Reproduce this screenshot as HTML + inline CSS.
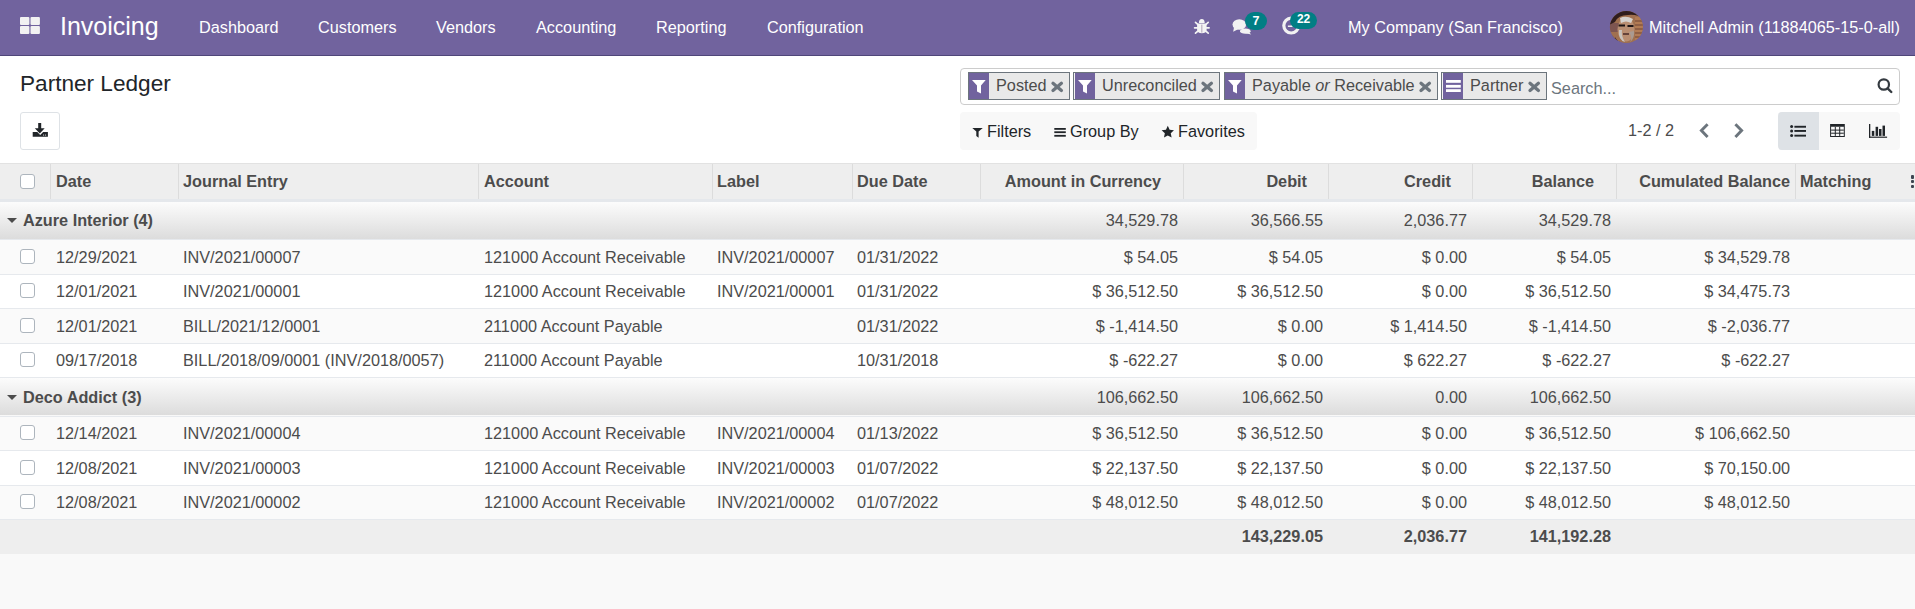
<!DOCTYPE html>
<html><head><meta charset="utf-8">
<style>
*{box-sizing:border-box;margin:0;padding:0}
html,body{width:1915px;height:609px;overflow:hidden;background:#f9f9f9;font-family:"Liberation Sans",sans-serif;color:#4c4c4c;font-size:16.25px}
.abs{position:absolute;white-space:nowrap}
.nav{position:absolute;left:0;top:0;width:1915px;height:56px;background:#71639e;border-bottom:1px solid #4f4679;color:#fff}
.nav .t{position:absolute;white-space:nowrap;font-size:16.25px;top:17.6px;line-height:18px}
.badge{position:absolute;height:18.4px;border-radius:9.2px;background:#017e84;color:#fff;font-size:12.5px;font-weight:bold;text-align:center;line-height:18px}
.cp{position:absolute;left:0;top:56px;width:1915px;height:107px;background:#fff}
.facet{position:absolute;top:72px;height:28px;border:1px solid #6c757d;background:#e9e9e9;white-space:nowrap}
.facet .ic{position:absolute;left:0;top:0;width:20px;height:26px;background:#71639e}
.facet .lb{position:absolute;left:27px;top:3.2px;font-size:16.25px;line-height:18px;color:#4c4c4c}
.facet .x{position:absolute;top:9px;width:11px;height:10px}
.facet.s{background:#e9e9e9}.facet.s .ic{left:1px}.facet.s .lb{left:28px}.facet.s:before{content:"";position:absolute;left:0;top:0;width:1px;height:26px;background:#f4f4f4}
.fb{position:absolute;top:112px;height:38px;font-size:16.25px;line-height:18px;color:#212529}
.thead{position:absolute;left:0;width:1915px;background:#eeeeee;border-top:1px solid #e2e2e2;border-bottom:3px solid #e5e8ec}
.sep{position:absolute;top:0;bottom:0;width:1px;background:#dcdcdc}
.th{position:absolute;top:8px;font-weight:bold;line-height:18px;white-space:nowrap;color:#4c4c4c}
.r{text-align:right}
.cb{position:absolute;left:20px;width:15px;height:15px;border:1px solid #adb5bd;border-radius:3px;background:#fff}
.grp{position:absolute;left:0;width:1915px;background:linear-gradient(#fcfcfc,#dcdcdc);border-bottom:1px solid #e6e9ed}
.grp .gl{position:absolute;left:23px;top:10px;font-weight:bold;line-height:18px;color:#4c4c4c}
.caret{position:absolute;left:7px;top:17px;width:0;height:0;border-left:5px solid transparent;border-right:5px solid transparent;border-top:5px solid #4c4c4c}
.row{position:absolute;left:0;width:1915px;background:#fff;border-bottom:1px solid #e6e9ed}
.row.odd{background:#fafafa}
.td{position:absolute;top:8px;line-height:18px;white-space:nowrap;color:#4c4c4c}
.grp .td{top:10px}
.foot{position:absolute;left:0;width:1915px;background:#eeeeee}
.b{font-weight:bold}
.opt{position:absolute;left:1910.5px;top:11.2px;width:4px}
.opt i{display:block;width:3.5px;height:3.5px;border-radius:1px;background:#3d4550;margin-bottom:1.3px}
</style></head><body>
<div class="nav">
  <svg class="abs" style="left:19px;top:16px" width="22" height="19" viewBox="0 0 22 19"><g fill="#f2f2f2"><rect x="1" y="1" width="9.4" height="8" rx="1"/><rect x="11.5" y="1" width="9.4" height="8" rx="1"/><rect x="1" y="10" width="9.4" height="8" rx="1"/><rect x="11.5" y="10" width="9.4" height="8" rx="1"/></g></svg>
  <div class="t" style="left:60px;top:12.3px;font-size:25px;line-height:28px">Invoicing</div>
  <div class="t" style="left:199px">Dashboard</div>
  <div class="t" style="left:318px">Customers</div>
  <div class="t" style="left:436px">Vendors</div>
  <div class="t" style="left:536px">Accounting</div>
  <div class="t" style="left:656px">Reporting</div>
  <div class="t" style="left:767px">Configuration</div>
  <!-- bug -->
  <svg class="abs" style="left:1190px;top:14px" width="24" height="24" viewBox="1190 14 24 24"><g fill="#f4f4f4"><path d="M1198.9 22.9A2.9 3.8 0 0 1 1204.7 22.9Z"/><path d="M1197.1 23.6H1206.6V29.5Q1206.6 33.2 1201.85 33.2Q1197.1 33.2 1197.1 29.5Z"/></g><g stroke="#f4f4f4" stroke-width="1.7" stroke-linecap="round"><path d="M1195.5 22.4L1198 24.6M1194.6 27.8H1197.6M1195.5 33.1L1198 31M1208.2 22.4L1205.7 24.6M1209.1 27.8H1206.1M1208.2 33.1L1205.7 31"/></g><rect x="1201.4" y="24.6" width="0.9" height="8" fill="#a898b0"/></svg>
  <!-- comments -->
  <svg class="abs" style="left:1225px;top:8px" width="30" height="32" viewBox="1225 8 30 32"><g fill="#f2f2f2"><ellipse cx="1239.3" cy="24.5" rx="6.8" ry="5.3"/><path d="M1234 27.5L1233.2 31.8L1238 29.2Z"/><ellipse cx="1245.3" cy="31.2" rx="5.3" ry="2.6"/><path d="M1248 31L1251.2 34.6L1245.5 33.2Z"/></g></svg>
  <div class="badge" style="left:1245px;top:11.7px;width:22px;height:18.2px;line-height:18px">7</div>
  <!-- clock -->
  <svg class="abs" style="left:1278px;top:10px" width="30" height="30" viewBox="1278 10 30 30"><circle cx="1291.2" cy="25.6" r="7.4" fill="none" stroke="#f2f2f2" stroke-width="3.2"/><path d="M1287.9 26.3H1292.5V21" fill="none" stroke="#f2f2f2" stroke-width="1.6"/></svg>
  <div class="badge" style="left:1290.2px;top:12.1px;width:26.8px;height:16.7px;line-height:14.5px;font-size:12px">22</div>
  <div class="t" style="left:1348px">My Company (San Francisco)</div>
  <svg class="abs" style="left:1609px;top:10px" width="35" height="34" viewBox="0 0 35 34"><defs><clipPath id="av"><ellipse cx="17.4" cy="17" rx="16.5" ry="16"/></clipPath></defs><g clip-path="url(#av)"><rect width="35" height="34" fill="#a0704f"/><rect x="0" y="13" width="10" height="9" fill="#7d5550"/><path d="M0 0H35V10Q30 4 19 5Q9 5 6 12L0 15Z" fill="#2f1d1d"/><path d="M0 22Q5 29 14 34H0Z" fill="#2a1b1b"/><ellipse cx="17" cy="19.5" rx="8.5" ry="12" fill="#b98e72"/><path d="M11 8Q17 5 24 9L22 13Q17 10 12 13Z" fill="#d6d2ce"/><path d="M10 20Q9 30 16 32Q12 26 13 20Z" fill="#c9c3bd"/><path d="M20 22Q24 28 21 32Q26 28 25 21Z" fill="#aa9a90"/><path d="M9.5 15.5h6.5M18.5 16h6" stroke="#1e1414" stroke-width="2.2"/><path d="M14 24h6" stroke="#4a2a2a" stroke-width="1.6"/><rect x="26" y="7" width="9" height="24" fill="#b57d55" opacity="0.85"/><path d="M26 11h9M26 15h9M26 19h9M26 23h9M26 27h9" stroke="#6e4434" stroke-width="1"/><path d="M6 27Q9 33 13 34L7 34Z" fill="#3a2525"/></g></svg>
  <div class="t" style="left:1649px">Mitchell Admin (11884065-15-0-all)</div>
</div>
<div class="cp">
  <div class="abs" style="left:20px;top:15px;font-size:22.6px;line-height:26px;color:#212529">Partner Ledger</div>
  <div class="abs" style="left:20px;top:56px;width:40px;height:38px;border:1px solid #dee2e6;border-radius:3px;background:#fff"></div>
  <svg class="abs" style="left:26px;top:60px" width="28" height="28" viewBox="26 116 28 28"><path d="M38.2 123h3v5.2h3.5l-4.9 5.3-5-5.3h3.4z" fill="#212529"/><path d="M32.7 132.1h4.6l2.9 2.9 2.9-2.9h4.8v4.6H32.7z" fill="#212529"/><circle cx="43.6" cy="135" r="0.6" fill="#fff"/><circle cx="45.6" cy="135" r="0.6" fill="#fff"/></svg>
</div>
<!-- search box -->
<div class="abs" style="left:960px;top:68px;width:940px;height:37px;border:1px solid #cccccc;border-radius:4px;background:#fff"></div>
<div class="facet" style="left:968px;width:102px"><div class="ic"></div><div class="lb">Posted</div></div>
<div class="facet s" style="left:1073px;width:147px"><div class="ic"></div><div class="lb">Unreconciled</div></div>
<div class="facet" style="left:1224px;width:214px"><div class="ic"></div><div class="lb">Payable <i>or</i> Receivable</div></div>
<div class="facet s" style="left:1441px;width:106px"><div class="ic"></div><div class="lb">Partner</div></div>
<div class="abs" style="left:1551px;top:79px;font-size:16.25px;line-height:18px;color:#6c757d">Search...</div>
<!-- filters bar -->
<div class="abs" style="left:960px;top:112px;width:297px;height:38px;background:#f8f8f8;border-radius:4px"></div>
<div class="abs fb" style="left:987px;top:122px">Filters</div>
<div class="abs fb" style="left:1070px;top:122px">Group By</div>
<div class="abs fb" style="left:1178px;top:122px">Favorites</div>
<!-- pager -->
<div class="abs" style="left:1628px;top:121.2px;font-size:16.25px;line-height:18px;color:#4c4c4c">1-2 / 2</div>
<!-- view switcher -->
<div class="abs" style="left:1778px;top:112px;width:122px;height:38px;background:#f8f8f8;border-radius:4px"></div>
<div class="abs" style="left:1778px;top:112px;width:41px;height:38px;background:#dee2e6;border-radius:4px 0 0 4px"></div>
<div class="thead" style="top:163px;height:39px">
<div class="sep" style="left:178px"></div>
<div class="sep" style="left:478px"></div>
<div class="sep" style="left:712px"></div>
<div class="sep" style="left:852px"></div>
<div class="sep" style="left:980px"></div>
<div class="sep" style="left:1183px"></div>
<div class="sep" style="left:1328px"></div>
<div class="sep" style="left:1472px"></div>
<div class="sep" style="left:1616px"></div>
<div class="sep" style="left:1795px"></div>
<div class="th" style="left:56px">Date</div>
<div class="th" style="left:183px">Journal Entry</div>
<div class="th" style="left:484px">Account</div>
<div class="th" style="left:717px">Label</div>
<div class="th" style="left:857px">Due Date</div>
<div class="th r" style="right:754px">Amount in Currency</div>
<div class="th r" style="right:608px">Debit</div>
<div class="th r" style="right:464px">Credit</div>
<div class="th r" style="right:321px">Balance</div>
<div class="th r" style="right:125px">Cumulated Balance</div>
<div class="th" style="left:1800px">Matching</div>
<div class="sep" style="left:50px"></div>
<div class="cb" style="top:10px"></div>
<div class="opt"><i></i><i></i><i></i></div>
</div>
<div class="grp" style="top:202px;height:38px;"><div class="caret" style="top:16px"></div><div class="gl" style="top:9px">Azure Interior (4)</div><div class="td r" style="right:737px;top:9px">34,529.78</div><div class="td r" style="right:592px;top:9px">36,566.55</div><div class="td r" style="right:448px;top:9px">2,036.77</div><div class="td r" style="right:304px;top:9px">34,529.78</div></div>
<div class="row odd" style="top:240.00px;height:35.00px"><div class="cb" style="top:8.90px"></div><div class="td" style="left:56px;top:7.90px">12/29/2021</div><div class="td" style="left:183px;top:7.90px">INV/2021/00007</div><div class="td" style="left:484px;top:7.90px">121000 Account Receivable</div><div class="td" style="left:717px;top:7.90px">INV/2021/00007</div><div class="td" style="left:857px;top:7.90px">01/31/2022</div><div class="td r" style="right:737px;top:7.90px">$ 54.05</div><div class="td r" style="right:592px;top:7.90px">$ 54.05</div><div class="td r" style="right:448px;top:7.90px">$ 0.00</div><div class="td r" style="right:304px;top:7.90px">$ 54.05</div><div class="td r" style="right:125px;top:7.90px">$ 34,529.78</div></div>
<div class="row" style="top:275.00px;height:34.00px"><div class="cb" style="top:8.40px"></div><div class="td" style="left:56px;top:7.40px">12/01/2021</div><div class="td" style="left:183px;top:7.40px">INV/2021/00001</div><div class="td" style="left:484px;top:7.40px">121000 Account Receivable</div><div class="td" style="left:717px;top:7.40px">INV/2021/00001</div><div class="td" style="left:857px;top:7.40px">01/31/2022</div><div class="td r" style="right:737px;top:7.40px">$ 36,512.50</div><div class="td r" style="right:592px;top:7.40px">$ 36,512.50</div><div class="td r" style="right:448px;top:7.40px">$ 0.00</div><div class="td r" style="right:304px;top:7.40px">$ 36,512.50</div><div class="td r" style="right:125px;top:7.40px">$ 34,475.73</div></div>
<div class="row odd" style="top:309.00px;height:35.00px"><div class="cb" style="top:8.90px"></div><div class="td" style="left:56px;top:7.90px">12/01/2021</div><div class="td" style="left:183px;top:7.90px">BILL/2021/12/0001</div><div class="td" style="left:484px;top:7.90px">211000 Account Payable</div><div class="td" style="left:857px;top:7.90px">01/31/2022</div><div class="td r" style="right:737px;top:7.90px">$ -1,414.50</div><div class="td r" style="right:592px;top:7.90px">$ 0.00</div><div class="td r" style="right:448px;top:7.90px">$ 1,414.50</div><div class="td r" style="right:304px;top:7.90px">$ -1,414.50</div><div class="td r" style="right:125px;top:7.90px">$ -2,036.77</div></div>
<div class="row" style="top:344.00px;height:34.00px"><div class="cb" style="top:8.40px"></div><div class="td" style="left:56px;top:7.40px">09/17/2018</div><div class="td" style="left:183px;top:7.40px">BILL/2018/09/0001 (INV/2018/0057)</div><div class="td" style="left:484px;top:7.40px">211000 Account Payable</div><div class="td" style="left:857px;top:7.40px">10/31/2018</div><div class="td r" style="right:737px;top:7.40px">$ -622.27</div><div class="td r" style="right:592px;top:7.40px">$ 0.00</div><div class="td r" style="right:448px;top:7.40px">$ 622.27</div><div class="td r" style="right:304px;top:7.40px">$ -622.27</div><div class="td r" style="right:125px;top:7.40px">$ -622.27</div></div>
<div class="grp" style="top:378px;height:39px;background:linear-gradient(#fcfcfc,#dcdcdc) 0 0/100% 37px no-repeat,#f8f8f8"><div class="caret" style="top:17.2px"></div><div class="gl" style="top:10.2px">Deco Addict (3)</div><div class="td r" style="right:737px;top:10.2px">106,662.50</div><div class="td r" style="right:592px;top:10.2px">106,662.50</div><div class="td r" style="right:448px;top:10.2px">0.00</div><div class="td r" style="right:304px;top:10.2px">106,662.50</div></div>
<div class="row odd" style="top:417.00px;height:34.00px"><div class="cb" style="top:8.40px"></div><div class="td" style="left:56px;top:7.40px">12/14/2021</div><div class="td" style="left:183px;top:7.40px">INV/2021/00004</div><div class="td" style="left:484px;top:7.40px">121000 Account Receivable</div><div class="td" style="left:717px;top:7.40px">INV/2021/00004</div><div class="td" style="left:857px;top:7.40px">01/13/2022</div><div class="td r" style="right:737px;top:7.40px">$ 36,512.50</div><div class="td r" style="right:592px;top:7.40px">$ 36,512.50</div><div class="td r" style="right:448px;top:7.40px">$ 0.00</div><div class="td r" style="right:304px;top:7.40px">$ 36,512.50</div><div class="td r" style="right:125px;top:7.40px">$ 106,662.50</div></div>
<div class="row" style="top:451.00px;height:35.00px"><div class="cb" style="top:8.90px"></div><div class="td" style="left:56px;top:7.90px">12/08/2021</div><div class="td" style="left:183px;top:7.90px">INV/2021/00003</div><div class="td" style="left:484px;top:7.90px">121000 Account Receivable</div><div class="td" style="left:717px;top:7.90px">INV/2021/00003</div><div class="td" style="left:857px;top:7.90px">01/07/2022</div><div class="td r" style="right:737px;top:7.90px">$ 22,137.50</div><div class="td r" style="right:592px;top:7.90px">$ 22,137.50</div><div class="td r" style="right:448px;top:7.90px">$ 0.00</div><div class="td r" style="right:304px;top:7.90px">$ 22,137.50</div><div class="td r" style="right:125px;top:7.90px">$ 70,150.00</div></div>
<div class="row odd" style="top:486.00px;height:34.00px"><div class="cb" style="top:8.40px"></div><div class="td" style="left:56px;top:7.40px">12/08/2021</div><div class="td" style="left:183px;top:7.40px">INV/2021/00002</div><div class="td" style="left:484px;top:7.40px">121000 Account Receivable</div><div class="td" style="left:717px;top:7.40px">INV/2021/00002</div><div class="td" style="left:857px;top:7.40px">01/07/2022</div><div class="td r" style="right:737px;top:7.40px">$ 48,012.50</div><div class="td r" style="right:592px;top:7.40px">$ 48,012.50</div><div class="td r" style="right:448px;top:7.40px">$ 0.00</div><div class="td r" style="right:304px;top:7.40px">$ 48,012.50</div><div class="td r" style="right:125px;top:7.40px">$ 48,012.50</div></div>
<div class="foot" style="top:520.00px;height:34.00px"><div class="td r b" style="right:592px;top:6.95px">143,229.05</div><div class="td r b" style="right:448px;top:6.95px">2,036.77</div><div class="td r b" style="right:304px;top:6.95px">141,192.28</div></div>
<svg class="abs" style="left:0;top:0" width="1915" height="609" viewBox="0 0 1915 609">
<path d="M972 80H985.7L981 85.5V93.6L977 91.5V85.5Z" fill="#fff"/>
<path d="M1053.0 83.3L1061.3999999999999 90.4M1061.3999999999999 83.3L1053.0 90.4" stroke="#6c757d" stroke-width="3.3" stroke-linecap="round"/>
<path d="M1078 80H1091.7L1087 85.5V93.6L1083 91.5V85.5Z" fill="#fff"/>
<path d="M1203.0 83.3L1211.3999999999999 90.4M1211.3999999999999 83.3L1203.0 90.4" stroke="#6c757d" stroke-width="3.3" stroke-linecap="round"/>
<path d="M1228 80H1241.7L1237 85.5V93.6L1233 91.5V85.5Z" fill="#fff"/>
<path d="M1421.0 83.3L1429.3999999999999 90.4M1429.3999999999999 83.3L1421.0 90.4" stroke="#6c757d" stroke-width="3.3" stroke-linecap="round"/>
<g fill="#fff"><rect x="1446" y="80" width="14.8" height="2.8"/><rect x="1446" y="84.9" width="14.8" height="2.8"/><rect x="1446" y="89.2" width="14.8" height="2.8"/></g>
<path d="M1530.0 83.3L1538.3999999999999 90.4M1538.3999999999999 83.3L1530.0 90.4" stroke="#6c757d" stroke-width="3.3" stroke-linecap="round"/>
<circle cx="1883.8" cy="84.5" r="5.2" fill="none" stroke="#343a40" stroke-width="2.2"/><path d="M1887.6 88.3L1891.3 92" stroke="#343a40" stroke-width="2.4" stroke-linecap="round"/>
<path d="M972.3 128.1H982.8L978.6 131.6V137.7L976.3 135.9V131.6Z" fill="#212529"/>
<g fill="#212529"><rect x="1054.3" y="128" width="11.5" height="1.8"/><rect x="1054.3" y="131.3" width="11.5" height="1.8"/><rect x="1054.3" y="134.9" width="11.5" height="1.8"/></g>
<polygon points="1167.80,125.80 1169.62,129.79 1173.98,130.29 1170.75,133.26 1171.62,137.56 1167.80,135.40 1163.98,137.56 1164.85,133.26 1161.62,130.29 1165.98,129.79" fill="#212529"/>
<path d="M1707.6 124.3L1701.4 130.6L1707.6 136.9" fill="none" stroke="#6c757d" stroke-width="2.9"/>
<path d="M1735.4 124.3L1741.6 130.6L1735.4 136.9" fill="none" stroke="#6c757d" stroke-width="2.9"/>
<g fill="#212529"><circle cx="1791.6" cy="126.6" r="1.5"/><circle cx="1791.6" cy="130.9" r="1.5"/><circle cx="1791.6" cy="135.6" r="1.5"/><rect x="1794.4" y="125.8" width="11.6" height="1.9"/><rect x="1794.4" y="130" width="11.6" height="1.9"/><rect x="1794.4" y="134.7" width="11.6" height="1.9"/></g>
<g fill="#212529"><path d="M1830.1 124h14.7v12.9h-14.7zM1831.1 126.8v9.1h12.7v-9.1z" fill-rule="evenodd"/><rect x="1831.1" y="129.6" width="12.7" height="1"/><rect x="1831.1" y="132.7" width="12.7" height="1"/><rect x="1834.8" y="126.8" width="1" height="9.1"/><rect x="1839.2" y="126.8" width="1" height="9.1"/></g>
<g fill="#212529"><rect x="1869" y="124" width="1.3" height="13.8"/><rect x="1869" y="136.6" width="18.1" height="1.2"/><rect x="1871.8" y="130.9" width="2.5" height="5"/><rect x="1875.6" y="126.8" width="2.5" height="9.1"/><rect x="1879" y="129" width="2.5" height="6.9"/><rect x="1882.5" y="125.6" width="2.5" height="10.3"/></g>
</svg>
</body></html>
